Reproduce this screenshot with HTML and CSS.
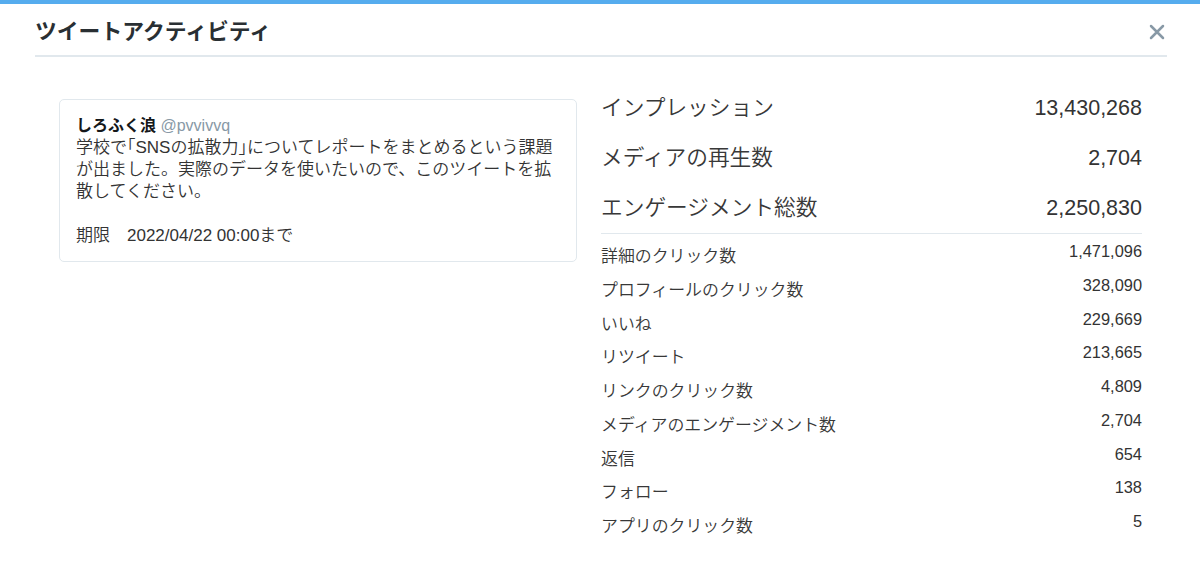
FILE: index.html
```html
<!DOCTYPE html>
<html lang="ja">
<head>
<meta charset="utf-8">
<title>ツイートアクティビティ</title>
<link rel="stylesheet" href="styles.css">
</head>
<body>
<div class="topbar"></div>
<div class="modal">
  <header class="header">
    <h1 class="title">ツイートアクティビティ</h1>
    <button class="close" aria-label="閉じる">
      <svg width="16" height="16" viewBox="0 0 16 16"><path d="M2 2 L14 14 M14 2 L2 14" stroke="#8899a6" stroke-width="2.5" stroke-linecap="round" fill="none"/></svg>
    </button>
  </header>
  <div class="content">
    <div class="tweet">
      <div class="author"><span class="name">しろふく浪</span> <span class="handle">@pvvivvq</span></div>
      <p class="text">学校で<span class="punct">「</span>SNSの拡散力<span class="punct">」</span>についてレポートをまとめるという課題<br>が出ました。実際のデータを使いたいので、このツイートを拡<br>散してください。</p>
      <p class="deadline">期限　2022/04/22 00:00まで</p>
    </div>
    <div class="stats">
      <div class="big-list">
        <div class="big-row"><span class="big-label">インプレッション</span><span class="big-value">13,430,268</span></div>
        <div class="big-row"><span class="big-label">メディアの再生数</span><span class="big-value">2,704</span></div>
        <div class="big-row"><span class="big-label">エンゲージメント総数</span><span class="big-value">2,250,830</span></div>
      </div>
      <div class="small-list">
        <div class="small-row"><span class="small-label">詳細のクリック数</span><span class="small-value">1,471,096</span></div>
        <div class="small-row"><span class="small-label">プロフィールのクリック数</span><span class="small-value">328,090</span></div>
        <div class="small-row"><span class="small-label">いいね</span><span class="small-value">229,669</span></div>
        <div class="small-row"><span class="small-label">リツイート</span><span class="small-value">213,665</span></div>
        <div class="small-row"><span class="small-label">リンクのクリック数</span><span class="small-value">4,809</span></div>
        <div class="small-row"><span class="small-label">メディアのエンゲージメント数</span><span class="small-value">2,704</span></div>
        <div class="small-row"><span class="small-label">返信</span><span class="small-value">654</span></div>
        <div class="small-row"><span class="small-label">フォロー</span><span class="small-value">138</span></div>
        <div class="small-row"><span class="small-label">アプリのクリック数</span><span class="small-value">5</span></div>
      </div>
    </div>
  </div>
</div>
</body>
</html>
```

FILE: styles.css
```css
* { box-sizing: border-box; }
html, body {
  margin: 0;
  padding: 0;
  background: #ffffff;
  font-family: "Liberation Sans", "Noto Sans CJK JP", sans-serif;
  color: #333333;
}
.topbar {
  height: 4px;
  background: #55acee;
}
.modal {
  width: 1200px;
}
.header {
  display: flex;
  align-items: center;
  justify-content: space-between;
  margin: 0 33px 0 35px;
  height: 53px;
  border-bottom: 2px solid #e1e8ed;
}
.title {
  margin: 0;
  font-size: 21.8px;
  line-height: 30px;
  font-weight: bold;
  color: #292f33;
  padding-top: 4px;
}
.close {
  border: 0;
  background: transparent;
  padding: 0;
  margin: 4px 1px 0 0;
  width: 18px;
  height: 18px;
  display: flex;
  align-items: center;
  justify-content: center;
}
.content {
  display: flex;
  align-items: flex-start;
  padding: 0 58px 0 59px;
  gap: 24px;
}
.tweet {
  width: 518px;
  margin-top: 42px;
  border: 1px solid #e1e8ed;
  border-radius: 5px;
  padding: 15px 16px 14px 16px;
  font-size: 17px;
  line-height: 22px;
}
.author {
  font-size: 16px;
  line-height: 22px;
}
.name {
  font-weight: bold;
  color: #14171a;
}
.handle {
  color: #8899a6;
}
.text {
  margin: 0;
  color: #333333;
  font-weight: 350;
}
.punct {
  font-feature-settings: "halt";
}
.deadline {
  margin: 22px 0 0 0;
  color: #333333;
  font-weight: 350;
}
.stats {
  flex: 1;
  padding-top: 26px;
}
.big-list {
  border-bottom: 1px solid #e1e8ed;
}
.big-row {
  display: flex;
  justify-content: space-between;
  align-items: center;
  height: 50px;
}
.big-label {
  font-size: 21.7px;
  line-height: 28px;
  color: #383838;
  font-weight: 350;
}
.big-value {
  font-size: 21.5px;
  line-height: 28px;
  color: #333333;
}
.small-list {
  padding-top: 7px;
}
.small-row {
  display: flex;
  justify-content: space-between;
  align-items: flex-start;
  height: 33.75px;
}
.small-label {
  font-size: 16.9px;
  line-height: 20px;
  margin-top: 6px;
  color: #383838;
  font-weight: 350;
}
.small-value {
  font-size: 16.4px;
  line-height: 20px;
  color: #333333;
}
```
